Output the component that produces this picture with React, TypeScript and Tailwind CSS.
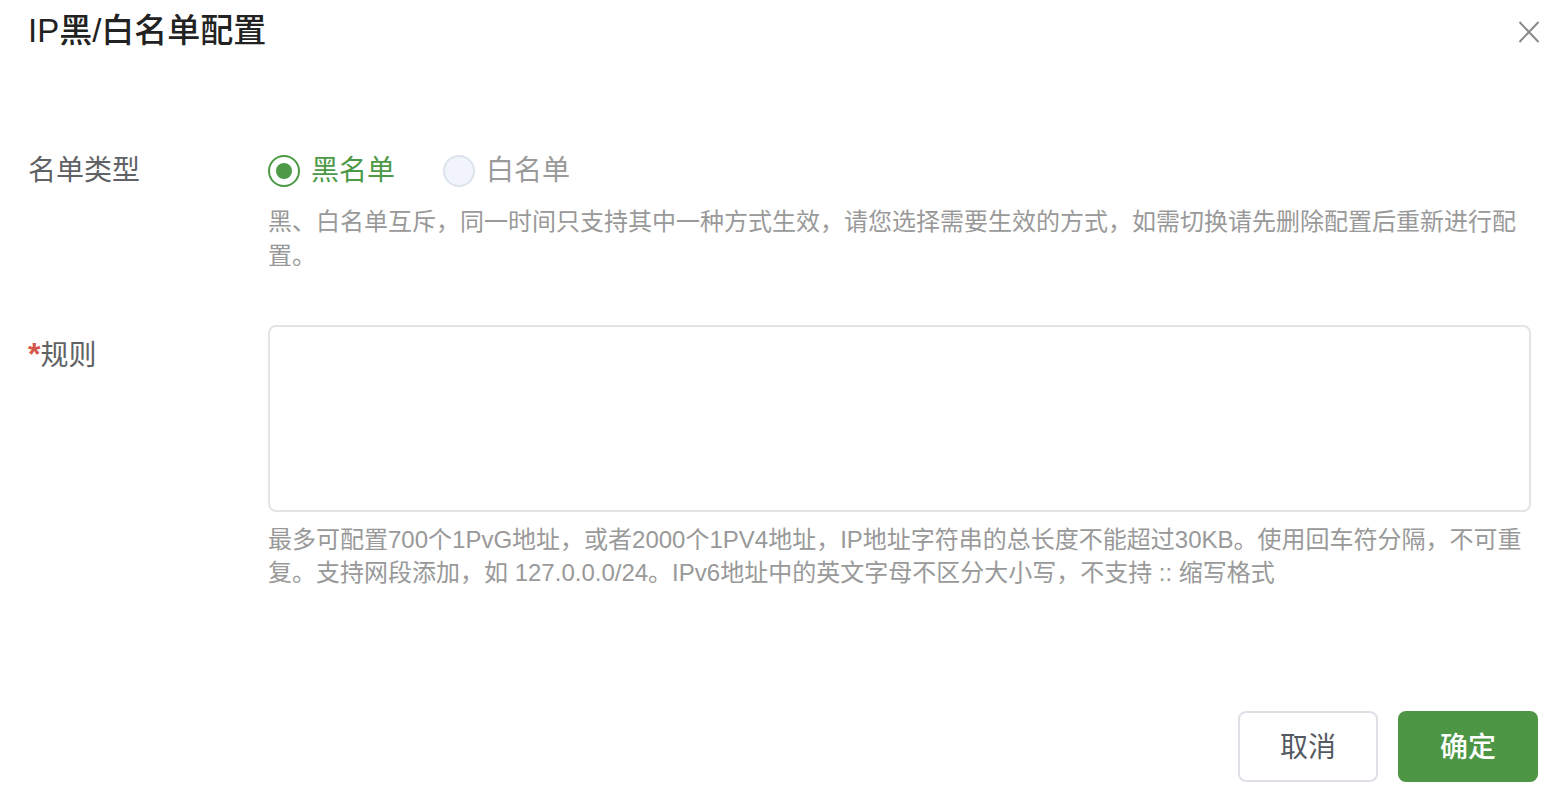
import React, { useState } from 'react'

const font = { fontFamily: '"Liberation Sans", "Noto Sans CJK SC", sans-serif' }

export default function App() {
  const [listType, setListType] = useState<'black' | 'white'>('black')
  const [rules, setRules] = useState('')

  return (
    <div
      style={font}
      className="w-[1558px] h-[798px] bg-white flex flex-col"
    >
      {/* header */}
      <div className="flex items-start justify-between pl-[28px] pr-[16px] pt-[7px]">
        <h2 className="text-[33px] leading-[48px] font-medium text-[#222222]">IP黑/白名单配置</h2>
        <button className="mt-[12px] w-[26px] h-[26px] flex items-center justify-center text-[#8a8a8a]">
          <svg width="22" height="24" viewBox="0 0 22 24" fill="none" stroke="currentColor" strokeWidth="2">
            <path d="M1.5 2 L20.5 22 M20.5 2 L1.5 22" />
          </svg>
        </button>
      </div>

      {/* form */}
      <div className="flex flex-col pl-[28px] pr-[27px] pt-[96px]">
        <div className="flex">
          <div className="w-[240px] shrink-0 text-[28px] leading-[40px] text-[#606266]">名单类型</div>
          <div className="flex-1 flex flex-col">
            <div className="flex items-center h-[40px]">
              <label
                className="flex items-center cursor-pointer mr-[48px]"
                onClick={() => setListType('black')}
              >
                <span
                  className={`w-[32px] h-[32px] rounded-full border-2 flex items-center justify-center ${
                    listType === 'black' ? 'border-[#4c9a45] bg-white' : 'border-[#dde3ec] bg-[#f1f5fb]'
                  }`}
                >
                  {listType === 'black' && <span className="w-[16px] h-[16px] rounded-full bg-[#4c9a45]" />}
                </span>
                <span
                  className={`ml-[11px] text-[28px] leading-[40px] ${
                    listType === 'black' ? 'text-[#4c9a45]' : 'text-[#9a9a9a]'
                  }`}
                >
                  黑名单
                </span>
              </label>
              <label className="flex items-center cursor-pointer" onClick={() => setListType('white')}>
                <span
                  className={`w-[32px] h-[32px] rounded-full border-2 flex items-center justify-center ${
                    listType === 'white' ? 'border-[#4c9a45] bg-white' : 'border-[#dde3ec] bg-[#f1f5fb]'
                  }`}
                >
                  {listType === 'white' && <span className="w-[16px] h-[16px] rounded-full bg-[#4c9a45]" />}
                </span>
                <span
                  className={`ml-[11px] text-[28px] leading-[40px] ${
                    listType === 'white' ? 'text-[#4c9a45]' : 'text-[#9a9a9a]'
                  }`}
                >
                  白名单
                </span>
              </label>
            </div>
            <p className="mt-[14px] text-[24px] leading-[34px] text-[#999999]">
              黑、白名单互斥，同一时间只支持其中一种方式生效，请您选择需要生效的方式，如需切换请先删除配置后重新进行配置。
            </p>
          </div>
        </div>

        <div className="flex mt-[52px]">
          <div className="w-[240px] shrink-0 pt-[9px] text-[28px] leading-[40px] text-[#606266]">
            <span className="text-[32px] font-bold text-[#d5574a]">*</span>规则
          </div>
          <div className="flex-1 flex flex-col">
            <textarea
              value={rules}
              onChange={(e) => setRules(e.target.value)}
              className="h-[187px] w-full resize-none rounded-[8px] border-2 border-[#e4e4e4] px-[14px] py-[10px] text-[24px] outline-none"
            />
            <p className="mt-[11px] text-[24px] leading-[33px] text-[#999999]">
              最多可配置700个1PvG地址，或者2000个1PV4地址，IP地址字符串的总长度不能超过30KB。使用回车符分隔，不可重复。支持网段添加，如 127.0.0.0/24。IPv6地址中的英文字母不区分大小写，不支持 :: 缩写格式
            </p>
          </div>
        </div>
      </div>

      {/* footer */}
      <div className="mt-auto flex justify-end gap-[20px] pr-[20px] pb-[16px]">
        <button className="w-[140px] h-[71px] pt-[3px] rounded-[8px] border-2 border-[#dde0e6] bg-white text-[28px] text-[#555a61]">
          取消
        </button>
        <button className="w-[140px] h-[71px] pt-[3px] rounded-[8px] bg-[#4d9645] text-[28px] font-medium text-white">
          确定
        </button>
      </div>
    </div>
  )
}
